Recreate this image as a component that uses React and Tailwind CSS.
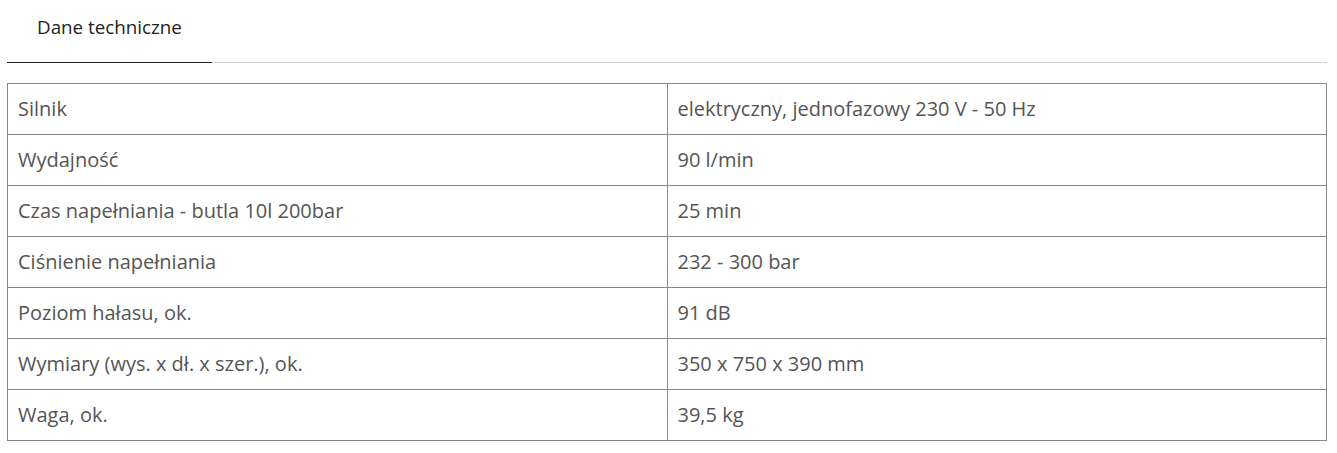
export default function App() {
  const rows = [
    ["Silnik", "elektryczny, jednofazowy 230 V - 50 Hz"],
    ["Wydajność", "90 l/min"],
    ["Czas napełniania - butla 10l 200bar", "25 min"],
    ["Ciśnienie napełniania", "232 - 300 bar"],
    ["Poziom hałasu, ok.", "91 dB"],
    ["Wymiary (wys. x dł. x szer.), ok.", "350 x 750 x 390 mm"],
    ["Waga, ok.", "39,5 kg"],
  ];
  return (
    <div className="w-[1337px] h-[453px] bg-white pl-[7px] pr-[10px]" style={{ fontFamily: '"Open Sans", sans-serif' }}>
      <div className="flex border-b border-[#d0d0d0]">
        <div className="-mb-px border-b border-[#222] px-[30px] pt-[14px] pb-[21px] text-[18.8px] leading-[27px] text-[#222]">
          Dane techniczne
        </div>
      </div>
      <table className="mt-[20px] w-full border-collapse table-fixed text-[20px] leading-[28px] text-[#555]">
        <tbody>
          {rows.map(([k, v]) => (
            <tr key={k} className="h-[51px]">
              <td className="border border-[#888] px-[10px] align-middle">{k}</td>
              <td className="border border-[#888] px-[10px] align-middle">{v}</td>
            </tr>
          ))}
        </tbody>
      </table>
    </div>
  );
}
